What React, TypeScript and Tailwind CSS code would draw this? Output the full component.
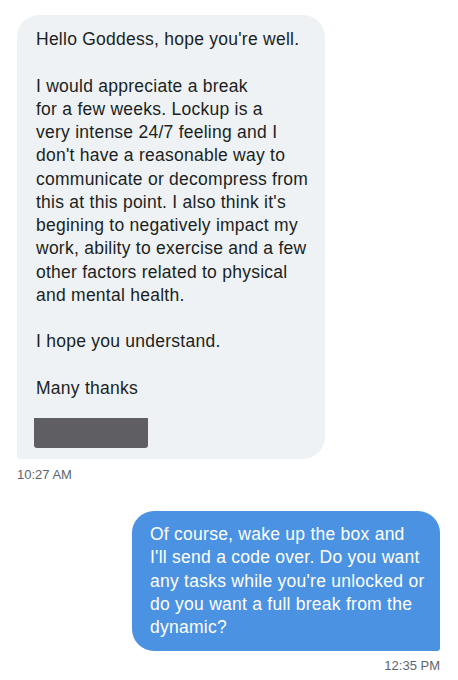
const incoming = [
  ['Hello Goddess, hope you\'re well.'],
  [
    'I would appreciate a break',
    'for a few weeks. Lockup is a',
    'very intense 24/7 feeling and I',
    'don\'t have a reasonable way to',
    'communicate or decompress from',
    'this at this point. I also think it\'s',
    'begining to negatively impact my',
    'work, ability to exercise and a few',
    'other factors related to physical',
    'and mental health.',
  ],
  ['I hope you understand.'],
  ['Many thanks'],
]

const outgoing = [
  'Of course, wake up the box and',
  'I\'ll send a code over. Do you want',
  'any tasks while you\'re unlocked or',
  'do you want a full break from the',
  'dynamic?',
]

export default function App(): React.JSX.Element {
  return (
    <div className="min-h-[680px] w-[458px] bg-white pl-[17px] pr-[18px] pt-[15px] font-['Liberation_Sans',Arial,sans-serif] text-[17.5px] leading-[23.25px] tracking-[0.25px]">
      <div className="flex flex-col items-start">
        <div className="w-[308px] rounded-[22px] rounded-bl-[3px] bg-[#eef2f4] pb-[11px] pl-[19px] pr-[10px] pt-[13px] text-[#1b1f23]">
          <div className="flex flex-col gap-[23.25px]">
            {incoming.map((para, i) => (
              <p key={i}>
                {para.map(line => (
                  <span key={line} className="block whitespace-nowrap">
                    {line}
                  </span>
                ))}
              </p>
            ))}
          </div>
          <div className="mt-[18px] h-[30px] w-[114px] -translate-x-[2px] rounded-b-[3px] bg-[#5f5f63]" />
        </div>
        <span className="mt-[8px] text-[13px] leading-[16px] tracking-normal text-[#5b6670]">
          10:27 AM
        </span>
      </div>

      <div className="mt-[28px] flex flex-col items-end">
        <div className="w-[308px] rounded-[22px] rounded-br-[3px] bg-[#4b92e3] pb-[12px] pl-[18px] pr-[8px] pt-[12px] text-white">
          {outgoing.map(line => (
            <span key={line} className="block whitespace-nowrap">
              {line}
            </span>
          ))}
        </div>
        <span className="mt-[7px] text-[13px] leading-[16px] tracking-normal text-[#5b6670]">
          12:35 PM
        </span>
      </div>
    </div>
  )
}
